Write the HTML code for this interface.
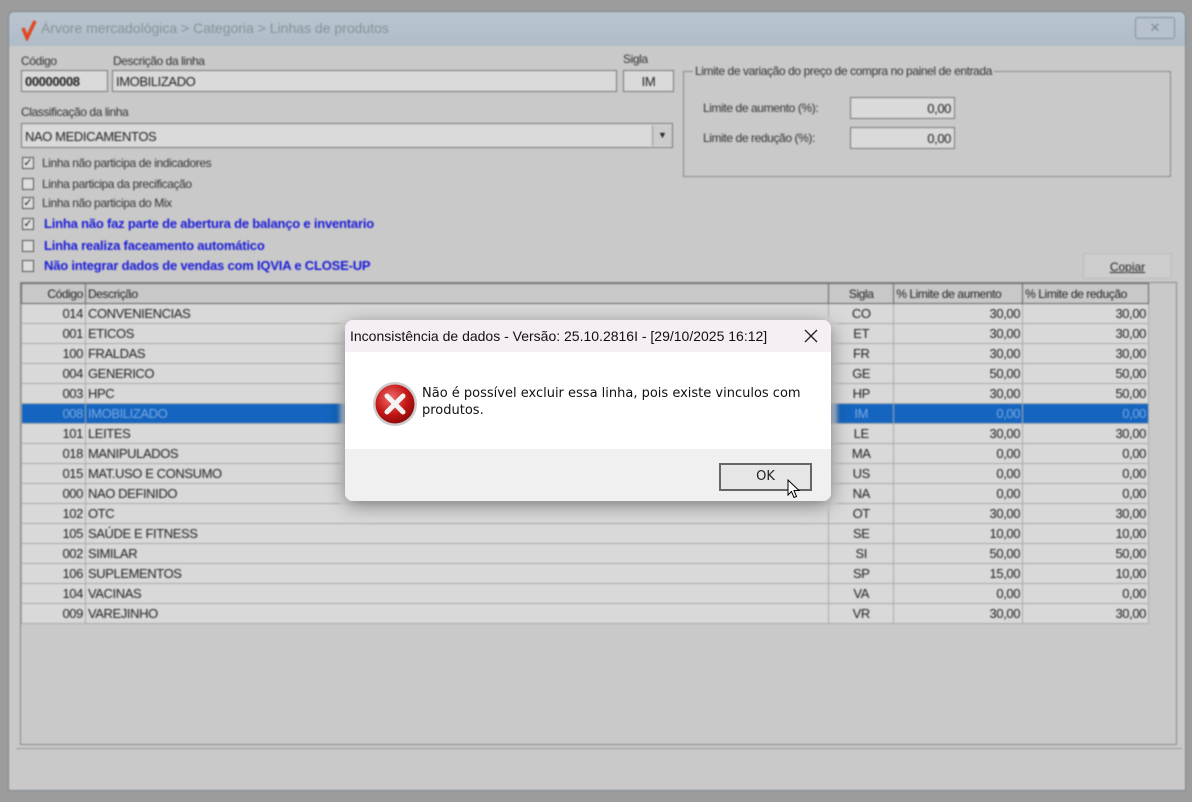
<!DOCTYPE html>
<html><head><meta charset="utf-8"><style>
*{box-sizing:border-box;margin:0;padding:0}
body{width:1192px;height:802px;background:#9c9c9c;position:relative;overflow:hidden;font-family:"Liberation Sans",sans-serif;font-size:12px;color:#222}
#bg{position:absolute;left:0;top:0;width:1192px;height:802px;filter:blur(0.7px)}
.win{position:absolute;left:8px;top:11px;width:1178px;height:780px;background:#c9c9c9;border:1px solid #7d8790;border-radius:6px 6px 0 0}
.tb{position:absolute;left:0;top:0;width:100%;height:34px;background:linear-gradient(#b9c4cf,#afbcc8);border-radius:6px 6px 0 0;color:#87919b;font-size:14px;padding:8px 0 0 32px}
.a{position:absolute}
.lbl{font-size:12px;color:#333;letter-spacing:-0.4px}
.inp{position:absolute;background:#dadada;border:1px solid #777;height:22px;font-size:13px;padding:3px 3px;letter-spacing:-0.4px}
.cb{position:absolute;width:12px;height:12px;border:1px solid #555;background:#ddd;font-size:11px;line-height:10px;text-align:center}
.blue{color:#1a1ad8;font-weight:bold;font-size:13px;letter-spacing:-0.2px}
table{border-collapse:collapse;font-size:13px;letter-spacing:-0.4px}
td{height:20px;border:1px solid #aaa;background:#d9d9d9;padding:0 2px;white-space:nowrap}
th{height:20px;border:1px solid #666;background:#c8c8c8;font-weight:normal;text-align:left;padding:0 2px;font-size:12px}
.r{text-align:right}.c{text-align:center}
tr.sel td{background:#1565c0;color:#7aa8e0}
.dlg{position:absolute;left:345px;top:320px;width:486px;height:181px;background:#fff;border-radius:8px;box-shadow:0 4px 18px rgba(0,0,0,.45);overflow:hidden;font-family:"DejaVu Sans","Liberation Sans",sans-serif}
</style></head><body>
<div id="bg">
<div class="win">
 <div class="tb">Árvore mercadológica &gt; Categoria &gt; Linhas de produtos</div>
 <svg class="a" style="left:12px;top:7px" width="16" height="22"><path d="M2 9 L6 19 L14 2" stroke="#e2461e" stroke-width="3.5" fill="none"/></svg>
 <div class="a" style="left:1126px;top:5px;width:40px;height:22px;border:1px solid #8290a0;border-radius:3px;background:#b7c2ce;color:#7a8794;text-align:center;font-size:13px;line-height:20px">✕</div>
</div>
<div class="a lbl" style="left:21px;top:54px">Código</div>
<div class="a lbl" style="left:113px;top:54px">Descrição da linha</div>
<div class="a lbl" style="left:623px;top:52px">Sigla</div>
<div class="inp" style="left:21px;top:70px;width:87px;font-weight:bold">00000008</div>
<div class="inp" style="left:112px;top:70px;width:505px">IMOBILIZADO</div>
<div class="inp" style="left:623px;top:70px;width:51px;text-align:center">IM</div>
<div class="a lbl" style="left:21px;top:105px">Classificação da linha</div>
<div class="inp" style="left:21px;top:123px;width:652px;height:25px;padding-top:5px">NAO MEDICAMENTOS</div>
<div class="a" style="left:652px;top:125px;width:20px;height:21px;background:#ccc;border-left:1px solid #999;font-size:9px;text-align:center;line-height:20px">▼</div>
<div class="cb" style="left:22px;top:157px">✓</div><div class="a lbl" style="left:42px;top:156px">Linha não participa de indicadores</div>
<div class="cb" style="left:22px;top:178px"></div><div class="a lbl" style="left:42px;top:177px">Linha  participa da precificação</div>
<div class="cb" style="left:22px;top:197px">✓</div><div class="a lbl" style="left:42px;top:196px">Linha não participa do Mix</div>
<div class="cb" style="left:22px;top:218px">✓</div><div class="a blue" style="left:44px;top:216px">Linha não faz parte de abertura de balanço e inventario</div>
<div class="cb" style="left:22px;top:240px"></div><div class="a blue" style="left:44px;top:238px">Linha realiza faceamento automático</div>
<div class="cb" style="left:22px;top:260px"></div><div class="a blue" style="left:44px;top:258px">Não integrar dados de vendas com IQVIA e CLOSE-UP</div>
<div class="a" style="left:683px;top:71px;width:488px;height:106px;border:1px solid #888"></div>
<div class="a lbl" style="left:693px;top:64px;background:#c9c9c9;padding:0 2px">Limite de variação do preço de compra no painel de entrada</div>
<div class="a lbl" style="left:703px;top:101px">Limite de aumento (%):</div>
<div class="a lbl" style="left:703px;top:131px">Limite de redução (%):</div>
<div class="inp" style="left:850px;top:97px;width:105px;text-align:right">0,00</div>
<div class="inp" style="left:850px;top:127px;width:105px;text-align:right">0,00</div>
<div class="a" style="left:1083px;top:253px;width:89px;height:26px;background:#cdcdcd;border:1px solid #bbb;text-align:center;line-height:26px;font-size:12px;text-decoration:underline">Copiar</div>
<div class="a" style="left:20px;top:282px;width:1157px;height:463px;border:1px solid #888;background:#c9c9c9">
<table style="width:1128px">
<tr><th class="r" style="width:64px">Código</th><th style="width:744px">Descrição</th><th class="c" style="width:65px">Sigla</th><th style="width:129px">% Limite de aumento</th><th style="width:126px">% Limite de redução</th></tr>
<tr><td class="r">014</td><td>CONVENIENCIAS</td><td class="c">CO</td><td class="r">30,00</td><td class="r">30,00</td></tr>
<tr><td class="r">001</td><td>ETICOS</td><td class="c">ET</td><td class="r">30,00</td><td class="r">30,00</td></tr>
<tr><td class="r">100</td><td>FRALDAS</td><td class="c">FR</td><td class="r">30,00</td><td class="r">30,00</td></tr>
<tr><td class="r">004</td><td>GENERICO</td><td class="c">GE</td><td class="r">50,00</td><td class="r">50,00</td></tr>
<tr><td class="r">003</td><td>HPC</td><td class="c">HP</td><td class="r">30,00</td><td class="r">50,00</td></tr>
<tr class="sel"><td class="r">008</td><td>IMOBILIZADO</td><td class="c">IM</td><td class="r">0,00</td><td class="r">0,00</td></tr>
<tr><td class="r">101</td><td>LEITES</td><td class="c">LE</td><td class="r">30,00</td><td class="r">30,00</td></tr>
<tr><td class="r">018</td><td>MANIPULADOS</td><td class="c">MA</td><td class="r">0,00</td><td class="r">0,00</td></tr>
<tr><td class="r">015</td><td>MAT.USO E CONSUMO</td><td class="c">US</td><td class="r">0,00</td><td class="r">0,00</td></tr>
<tr><td class="r">000</td><td>NAO DEFINIDO</td><td class="c">NA</td><td class="r">0,00</td><td class="r">0,00</td></tr>
<tr><td class="r">102</td><td>OTC</td><td class="c">OT</td><td class="r">30,00</td><td class="r">30,00</td></tr>
<tr><td class="r">105</td><td>SAÚDE E FITNESS</td><td class="c">SE</td><td class="r">10,00</td><td class="r">10,00</td></tr>
<tr><td class="r">002</td><td>SIMILAR</td><td class="c">SI</td><td class="r">50,00</td><td class="r">50,00</td></tr>
<tr><td class="r">106</td><td>SUPLEMENTOS</td><td class="c">SP</td><td class="r">15,00</td><td class="r">10,00</td></tr>
<tr><td class="r">104</td><td>VACINAS</td><td class="c">VA</td><td class="r">0,00</td><td class="r">0,00</td></tr>
<tr><td class="r">009</td><td>VAREJINHO</td><td class="c">VR</td><td class="r">30,00</td><td class="r">30,00</td></tr>
</table></div>
<div class="a" style="left:16px;top:748px;width:1166px;height:40px;border-top:1px solid #999"></div>
</div>
<div class="a" style="left:340px;top:316px;width:497px;height:195px;background:#ddd;opacity:.8;filter:blur(2px)"></div>
<div class="dlg">
 <div style="height:32px;background:#f5eef5;font-size:14px;padding:8px 0 0 5px;color:#111;font-family:'Liberation Sans',sans-serif;white-space:nowrap">Inconsistência de dados - Versão: 25.10.2816I - [29/10/2025 16:12]</div>
 <svg class="a" style="left:459px;top:9px" width="14" height="14"><path d="M1 1L13 13M13 1L1 13" stroke="#222" stroke-width="1.3"/></svg>
 <svg class="a" style="left:26px;top:60px" width="48" height="48"><defs><radialGradient id="g" cx=".4" cy=".35" r=".7"><stop offset="0" stop-color="#f06a6a"/><stop offset=".6" stop-color="#c41616"/><stop offset="1" stop-color="#8a0808"/></radialGradient></defs><circle cx="24" cy="24" r="22" fill="#ccc"/><circle cx="24" cy="24" r="19.5" fill="url(#g)"/><path d="M16 16L32 32M32 16L16 32" stroke="#f2f2f2" stroke-width="5" stroke-linecap="round"/></svg>
 <div class="a" style="left:77px;top:65px;font-size:13px;line-height:17px;color:#111">Não é possível excluir essa linha, pois existe vinculos com<br>produtos.</div>
 <div class="a" style="left:0;top:129px;width:100%;height:52px;background:#f0f0f0"></div>
 <div class="a" style="left:374px;top:143px;width:93px;height:28px;border:2px solid #666;background:#e6e6e6;text-align:center;line-height:24px;font-size:13px">OK</div>
 <svg class="a" style="left:442px;top:159px" width="14" height="22"><path d="M1 1 L1 16 L4.5 12.5 L7 18.5 L9.5 17.5 L7 11.5 L12 11.5 Z" fill="#fff" stroke="#000" stroke-width="1"/></svg>
</div>
</body></html>
